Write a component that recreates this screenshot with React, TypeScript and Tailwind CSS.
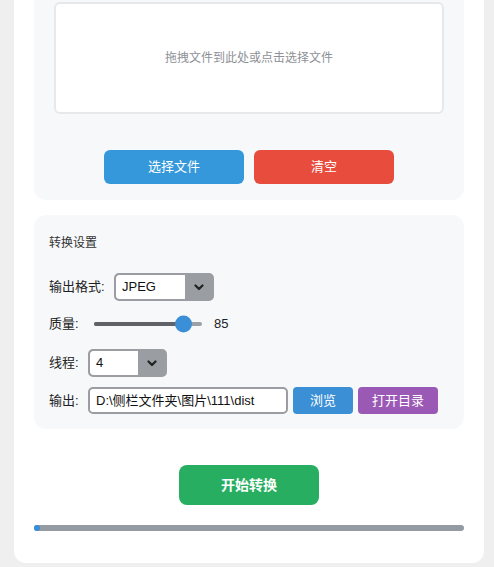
import React from "react";

function Chevron() {
  return (
    <svg width="10" height="7" viewBox="0 0 10 7" fill="none">
      <path d="M1.5 1.5 L5 5 L8.5 1.5" stroke="#222" strokeWidth="2.2" strokeLinecap="round" strokeLinejoin="round" />
    </svg>
  );
}

function Select({ value, width }: { value: string; width: string }) {
  return (
    <div className={`flex h-[28px] ${width} overflow-hidden rounded-[5px] border-2 border-[#9a9da1] bg-[#9a9da1]`}>
      <div className="flex flex-1 items-center rounded-l-[3px] bg-white pl-[6px] text-[13px] text-[#111]">{value}</div>
      <div className="flex w-[27px] items-center justify-center">
        <Chevron />
      </div>
    </div>
  );
}

export default function App() {
  return (
    <div
      className="min-h-[567px] overflow-hidden bg-[#efefef] pl-[14px] pr-[10px]"
      style={{ fontFamily: '"Liberation Sans", "Noto Sans CJK SC", sans-serif' }}
    >
      <div className="-mt-[20px] rounded-b-[12px] bg-white px-[20px] pb-[32px]">
        {/* file panel */}
        <div className="rounded-[12px] bg-[#f7f8fa] px-[20px] pb-[16px] pt-[22px]">
          <div className="flex h-[112px] items-center justify-center rounded-[6px] border-2 border-[#e6e8ec] bg-white text-[12px] text-[#8d9096]">
            拖拽文件到此处或点击选择文件
          </div>
          <div className="mt-[36px] flex justify-center gap-[10px]">
            <button className="h-[34px] w-[140px] rounded-[6px] bg-[#3498db] text-[13px] text-white">选择文件</button>
            <button className="h-[34px] w-[140px] rounded-[6px] bg-[#e74c3c] text-[13px] text-white">清空</button>
          </div>
        </div>

        {/* settings panel */}
        <div className="mt-[15px] rounded-[12px] bg-[#f7f8fa] px-[15px] pb-[15px] pt-[20px] text-[13px] text-[#222]">
          <div className="text-[12px] leading-[16px] text-[#333]">转换设置</div>

          <div className="mt-[22px] flex items-center">
            <span className="w-[65px]">输出格式:</span>
            <Select value="JPEG" width="w-[100px]" />
          </div>

          <div className="mt-[13px] flex h-[20px] items-center">
            <span className="w-[45px]">质量:</span>
            <div className="relative h-[4px] w-[108px] rounded-full bg-[#9aa0a6]">
              <div className="h-full w-[90px] rounded-full bg-[#5f6368]" />
              <div className="absolute left-[81px] top-1/2 h-[17px] w-[17px] -translate-y-1/2 rounded-full bg-[#3b8fd6]" />
            </div>
            <span className="ml-[12px]">85</span>
          </div>

          <div className="mt-[15px] flex items-center">
            <span className="w-[39px]">线程:</span>
            <Select value="4" width="w-[79px]" />
          </div>

          <div className="mt-[10px] flex items-center">
            <span className="w-[39px]">输出:</span>
            <div className="flex h-[27px] w-[200px] items-center rounded-[5px] border-2 border-[#9a9da1] bg-white pl-[6px] text-[13px] text-[#111]">
              D:\侧栏文件夹\图片\111\dist
            </div>
            <button className="ml-[5px] h-[27px] w-[60px] rounded-[4px] bg-[#3a8fd5] text-[13px] text-white">浏览</button>
            <button className="ml-[5px] h-[27px] w-[80px] rounded-[4px] bg-[#9b59b6] text-[13px] text-white">打开目录</button>
          </div>
        </div>

        <div className="mt-[36px] flex justify-center">
          <button className="h-[40px] w-[140px] rounded-[8px] bg-[#27ae60] text-[14px] font-bold text-white">开始转换</button>
        </div>

        <div className="mt-[20px] h-[6px] rounded-full bg-[#939aa2]">
          <div className="h-full w-[6px] rounded-full bg-[#3b8fd6]" />
        </div>
      </div>
    </div>
  );
}
